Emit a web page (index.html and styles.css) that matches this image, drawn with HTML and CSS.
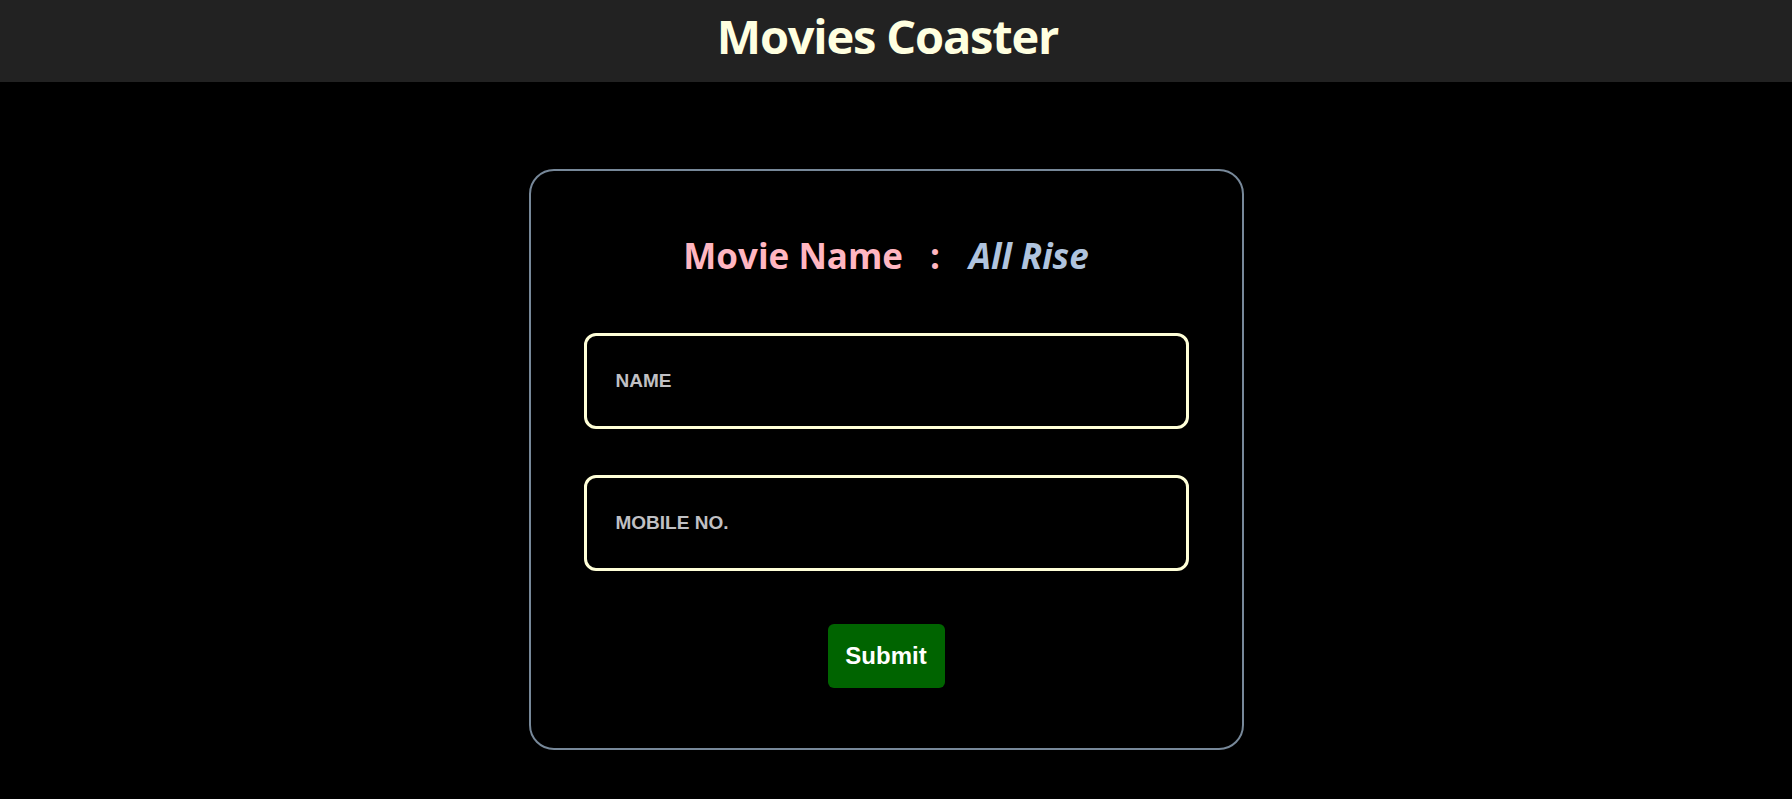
FILE: index.html
```html
<!DOCTYPE html>
<html lang="en">
<head>
<meta charset="utf-8">
<title>Movies Coaster</title>
<link rel="stylesheet" href="styles.css">
</head>
<body>
<header class="topbar">
  <h1 class="brand">Movies Coaster</h1>
</header>
<main class="page">
  <form class="card">
    <h2 class="movie"><span class="movie-label">Movie Name</span><span class="movie-colon">:</span><span class="movie-title">All Rise</span></h2>
    <input class="field" type="text" placeholder="NAME">
    <input class="field" type="text" placeholder="MOBILE NO.">
    <button class="submit" type="button">Submit</button>
  </form>
</main>
</body>
</html>
```
FILE: styles.css
```css
html, body {
  margin: 0;
  background: #000;
}

.topbar {
  height: 82px;
  background: #222222;
  padding-right: 17px;
  box-sizing: border-box;
  text-align: center;
}

.brand {
  margin: 0;
  padding-top: 12px;
  font-family: "Open Sans", "Noto Sans", sans-serif;
  font-weight: 700;
  font-size: 47px;
  line-height: 48px;
  letter-spacing: -1.2px;
  color: #ffffe0;
}

.page {
  display: flex;
  justify-content: center;
  padding: 87px 20px 0 0;
}

.card {
  width: 715px;
  box-sizing: border-box;
  border: 2px solid #778899;
  border-radius: 25px;
  padding: 62px 53px 60px 53px;
  display: flex;
  flex-direction: column;
  align-items: center;
}

.movie {
  margin: 0 0 54px 0;
  font-family: "Open Sans", "Noto Sans", sans-serif;
  font-weight: 700;
  font-size: 35px;
  line-height: 46px;
  white-space: nowrap;
}

.movie-label {
  color: #ffb6c1;
}

.movie-colon {
  color: #ffb6c1;
  margin: 0 29px 0 27px;
}

.movie-title {
  color: #b0c4de;
  font-style: italic;
}

.field {
  width: 100%;
  height: 96px;
  box-sizing: border-box;
  border: 3px solid #ffffd8;
  border-radius: 12px;
  background: #000;
  padding: 0 29px;
  font-family: "Liberation Sans", Arial, sans-serif;
  font-weight: 700;
  font-size: 19px;
  color: #ffffff;
  outline: none;
}

.field + .field {
  margin-top: 46px;
}

.field::placeholder {
  color: #c0c0c4;
  opacity: 1;
}

.submit {
  margin-top: 53px;
  height: 64px;
  width: 117px;
  padding: 0;
  border: none;
  border-radius: 6px;
  background: #006400;
  color: #ffffff;
  font-family: "Liberation Sans", Arial, sans-serif;
  font-weight: 700;
  font-size: 24px;
  cursor: pointer;
}
```
